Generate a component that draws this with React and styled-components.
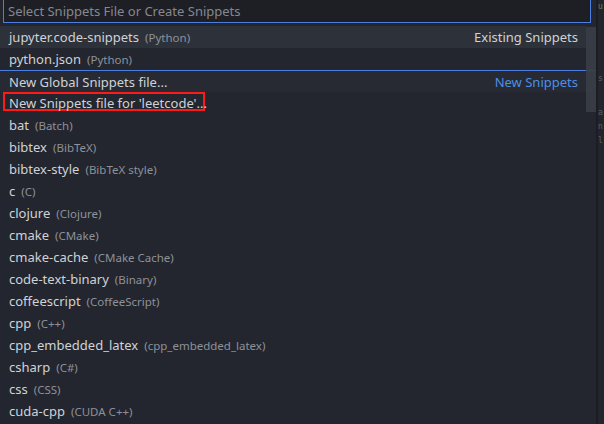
import React from "react";
import styled, { createGlobalStyle } from "styled-components";

const GlobalStyle = createGlobalStyle`
  html, body {
    margin: 0;
    padding: 0;
    background: #1f2228;
    font-family: "Noto Sans", "Open Sans", sans-serif;
    overflow: hidden;
  }
`;

const StyledPage = styled.div`
  display: flex;
  width: 604px;
  height: 424px;
  overflow: hidden;
`;

const StyledPicker = styled.div`
  position: relative;
  width: 596px;
  height: 424px;
  flex: none;
  background-color: #23262e;
  display: flex;
  flex-direction: column;
`;

const StyledInputWrap = styled.div`
  padding: 0 5px 0 3px;
  margin-top: -1px;
`;

const StyledInput = styled.div`
  height: 22px;
  border: 1px solid #4c7ee0;
  background-color: #1d1f24;
  color: #858891;
  font-size: 13px;
  line-height: 22px;
  padding-left: 4px;
  box-sizing: content-box;
`;

const StyledList = styled.div`
  margin-top: 3px;
  display: flex;
  flex-direction: column;
`;

const StyledRow = styled.div`
  height: 22px;
  display: flex;
  align-items: center;
  padding-left: 9px;
  box-sizing: border-box;
  font-size: 13px;
  color: #d0d2d6;
  white-space: nowrap;
  background-color: ${(p) =>
    p.$focused ? "#2d313a" : p.$hover ? "#272a32" : "transparent"};
  border-top: ${(p) => (p.$separator ? "1px solid #4c7ee0" : "none")};
  width: ${(p) => (p.$separator ? "596px" : "586px")};
  padding-right: ${(p) => (p.$separator ? "18px" : "8px")};
  position: relative;
`;

const StyledName = styled.span`
  position: relative;
`;

const StyledDesc = styled.span`
  margin-left: 6px;
  font-size: 11.5px;
  color: #8e9199;
`;

const StyledLabel = styled.span`
  margin-left: auto;
  color: ${(p) => (p.$blue ? "#4d8fe6" : "#d0d2d6")};
`;

const StyledMark = styled.div`
  position: absolute;
  left: 3px;
  top: 0;
  width: 202px;
  height: 19px;
  border: 2px solid #ff1a1a;
  box-sizing: border-box;
`;

const StyledScrollbar = styled.div`
  position: absolute;
  right: 0;
  top: 27px;
  width: 10px;
  height: 85px;
  background-color: #3a3e47;
  opacity: 0.9;
`;

const StyledEditor = styled.div`
  flex: 1;
  border-left: 2px solid #1b1d22;
  background-color: #22252c;
  position: relative;
  overflow: hidden;
  font-family: "DejaVu Sans Mono", monospace;
  font-size: 8px;
`;

const StyledGhost = styled.span`
  position: absolute;
  left: 0;
  top: ${(p) => p.$top}px;
  color: ${(p) => p.$color || "#5a5e66"};
`;

const languages = [
  ["bat", "Batch"],
  ["bibtex", "BibTeX"],
  ["bibtex-style", "BibTeX style"],
  ["c", "C"],
  ["clojure", "Clojure"],
  ["cmake", "CMake"],
  ["cmake-cache", "CMake Cache"],
  ["code-text-binary", "Binary"],
  ["coffeescript", "CoffeeScript"],
  ["cpp", "C++"],
  ["cpp_embedded_latex", "cpp_embedded_latex"],
  ["csharp", "C#"],
  ["css", "CSS"],
  ["cuda-cpp", "CUDA C++"],
];

const App = () => {
  return (
    <>
      <GlobalStyle />
      <StyledPage>
        <StyledPicker>
          <StyledInputWrap>
            <StyledInput>Select Snippets File or Create Snippets</StyledInput>
          </StyledInputWrap>
          <StyledList>
            <StyledRow $focused>
              <StyledName>jupyter.code-snippets</StyledName>
              <StyledDesc>(Python)</StyledDesc>
              <StyledLabel>Existing Snippets</StyledLabel>
            </StyledRow>
            <StyledRow>
              <StyledName>python.json</StyledName>
              <StyledDesc>(Python)</StyledDesc>
            </StyledRow>
            <StyledRow $separator $hover>
              <StyledName>New Global Snippets file...</StyledName>
              <StyledLabel $blue>New Snippets</StyledLabel>
            </StyledRow>
            <StyledRow>
              <StyledMark />
              <StyledName>New Snippets file for 'leetcode'...</StyledName>
            </StyledRow>
            {languages.map(([id, name]) => (
              <StyledRow key={id}>
                <StyledName>{id}</StyledName>
                <StyledDesc>({name})</StyledDesc>
              </StyledRow>
            ))}
          </StyledList>
          <StyledScrollbar />
        </StyledPicker>
        <StyledEditor>
          <StyledGhost $top={2} $color="#5f8a5f">u</StyledGhost>
          <StyledGhost $top={74}>s</StyledGhost>
          <StyledGhost $top={108}>a</StyledGhost>
          <StyledGhost $top={122}>n</StyledGhost>
          <StyledGhost $top={136}>l</StyledGhost>
        </StyledEditor>
      </StyledPage>
    </>
  );
};

export default App;
